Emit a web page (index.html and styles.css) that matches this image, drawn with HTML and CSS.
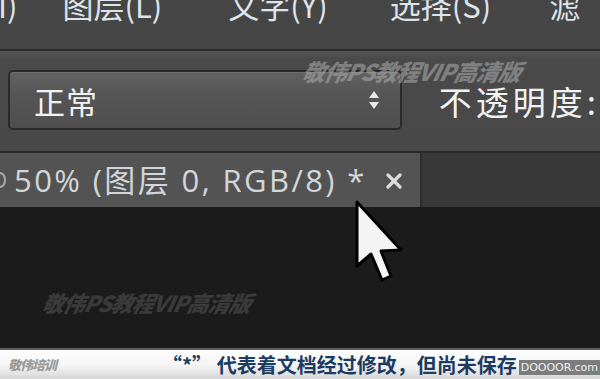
FILE: index.html
```html
<!DOCTYPE html>
<html lang="zh">
<head>
<meta charset="utf-8">
<link rel="stylesheet" href="styles.css">
</head>
<body>
<div class="screen">
  <div class="menubar">
    <span class="mi mi0">I)</span>
    <span class="mi mi1">图层(L)</span>
    <span class="mi mi2">文字(Y)</span>
    <span class="mi mi3">选择(S)</span>
    <span class="mi mi4">滤</span>
  </div>
  <div class="toolbar">
    <div class="select">
      <span class="select-label">正常</span>
      <svg class="spin" width="12" height="22" viewBox="0 0 12 22">
        <path d="M1 9 L6 2 L11 9 Z" fill="#e8e8e8"/>
        <path d="M1 13 L6 20 L11 13 Z" fill="#e8e8e8"/>
      </svg>
    </div>
    <span class="opacity">不透明度:</span>
    <span class="wm wm-top">敬伟PS教程VIP高清版</span>
  </div>
  <div class="tabrow">
    <div class="tab">
      <span class="tab-dot"></span>
      <span class="tab-title">50% (图层 0, RGB/8) *</span>
      <svg class="tab-close" width="18" height="16" viewBox="0 0 18 16">
        <path d="M3 2 L15 14 M15 2 L3 14" stroke="#dcdcdc" stroke-width="3.2" stroke-linecap="round"/>
      </svg>
    </div>
  </div>
  <div class="canvas">
    <span class="wm wm-bottom">敬伟PS教程VIP高清版</span>
    <svg class="cursor" width="52" height="86" viewBox="0 0 52 86">
      <path d="M3 2 L3 66 L17 54 L28 80 L37 76 L27 51 L47 50 Z" fill="#f4f4f4" stroke="#000" stroke-width="3" stroke-linejoin="round"/>
    </svg>
  </div>
  <div class="caption">
    <span class="logo">敬伟培训</span>
    <span class="caption-text">“*” 代表着文档经过修改，但尚未保存</span>
    <span class="site">DOOOOR.com</span>
  </div>
</div>
</body>
</html>
```
FILE: styles.css
```css
* { box-sizing: border-box; }
html, body { margin: 0; padding: 0; }
body {
  width: 600px;
  height: 379px;
  overflow: hidden;
  background: #1c1b1c;
  font-family: "Noto Sans CJK SC", "Noto Sans", sans-serif;
}
.screen {
  width: 600px;
  height: 379px;
  display: flex;
  flex-direction: column;
  overflow: hidden;
}
.menubar {
  height: 51px;
  flex: none;
  background: #464646;
  border-bottom: 2px solid #2b2b2b;
  display: flex;
  align-items: flex-start;
  overflow: hidden;
  color: #dde4ea;
  font-size: 31px;
  line-height: 30px;
  white-space: nowrap;
}
.mi { margin-top: -10px; display: block; }
.mi0 { margin-left: -2px; }
.mi1 { margin-left: 45px; }
.mi2 { margin-left: 66px; }
.mi3 { margin-left: 62px; }
.mi4 { margin-left: 58px; }
.toolbar {
  position: relative;
  height: 102px;
  flex: none;
  background: linear-gradient(#545454 0, #4a4a4a 8px, #484848 100%);
  border-bottom: 2px solid #2a2a2a;
  display: flex;
  align-items: center;
  padding-left: 8px;
}
.select {
  width: 396px;
  height: 60px;
  margin-top: -2px;
  border: 2px solid #2a2a2a;
  border-radius: 5px;
  background: linear-gradient(#626262, #555555 40%, #4f4f4f);
  box-shadow: inset 0 1px 0 #6e6e6e;
  display: flex;
  align-items: center;
  padding: 0 20px 0 24px;
}
.select-label {
  flex: 1;
  color: #f2f2f2;
  font-size: 31px;
  letter-spacing: 1px;
  line-height: 1;
}
.spin { display: block; }
.opacity {
  margin-left: 37px;
  color: #f2f2f2;
  font-size: 33px;
  letter-spacing: 4px;
  line-height: 1;
  white-space: nowrap;
}
.wm {
  position: absolute;
  font-family: "Noto Sans CJK SC", sans-serif;
  font-weight: 900;
  font-style: italic;
  white-space: nowrap;
  letter-spacing: -1px;
}
.wm-top {
  left: 303px;
  top: 7px;
  font-size: 23px;
  line-height: 26px;
  color: rgba(165, 165, 165, 0.6);
  transform: skewX(-12deg);
}
.tabrow {
  height: 54px;
  flex: none;
  background: #383838;
  display: flex;
}
.tab {
  width: 422px;
  height: 54px;
  background: #535353;
  border-right: 2px solid #2e2e2e;
  display: flex;
  align-items: center;
  color: #d2d6da;
  white-space: nowrap;
}
.tab-dot {
  width: 12px;
  height: 16px;
  margin-left: -6px;
  border-radius: 50%;
  border: 2px solid #a9a9a9;
  flex: none;
}
.tab-title {
  margin-left: 8px;
  font-family: "Open Sans", "Noto Sans CJK SC", sans-serif;
  font-size: 31px;
  letter-spacing: 2.4px;
  line-height: 1;
}
.tab-close {
  margin-left: 18px;
  margin-top: 2px;
  display: block;
  flex: none;
}
.canvas {
  position: relative;
  flex: 1;
  background: #1c1b1c;
}
.wm-bottom {
  left: 43px;
  top: 82px;
  font-size: 22px;
  line-height: 26px;
  color: #3b3a3b;
  transform: skewX(-12deg);
}
.cursor {
  position: absolute;
  left: 354px;
  top: -7px;
}
.caption {
  height: 31px;
  flex: none;
  background: linear-gradient(#ffffff, #f4f4f4 55%, #d6d6d6);
  border-top: 2px solid #5e5e5e;
  display: flex;
  align-items: center;
  white-space: nowrap;
}
.logo {
  margin-left: 8px;
  width: 54px;
  font-size: 13px;
  font-weight: 900;
  font-style: italic;
  color: #9a9a9a;
  letter-spacing: -1px;
}
.caption-text {
  margin-left: 100px;
  font-size: 20px;
  font-weight: bold;
  color: #1b3b62;
  line-height: 1;
}
.site {
  margin-left: 2px;
  background: #7c7c7c;
  color: #f0f0f0;
  font-family: "DejaVu Sans", sans-serif;
  font-size: 11px;
  line-height: 15px;
  padding: 0 2px;
  margin-top: 6px;
}
```
